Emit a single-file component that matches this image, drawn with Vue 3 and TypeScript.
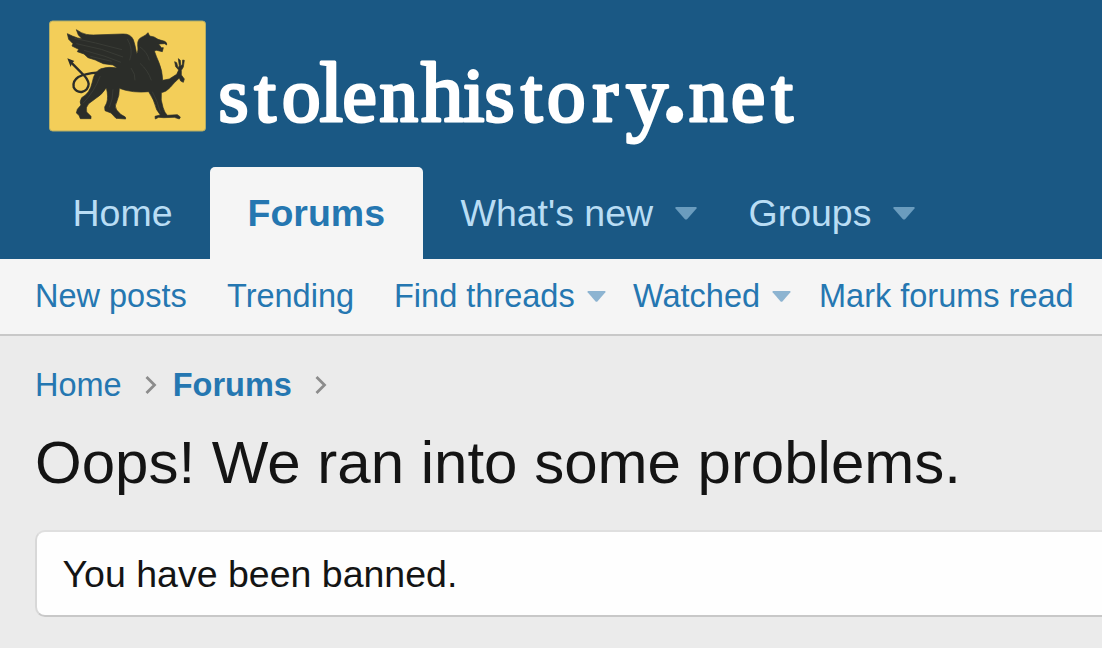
<script setup lang="ts">
interface NavItem {
  label: string
  key: string
  active?: boolean
  menu?: boolean
}

const tabs: NavItem[] = [
  { label: 'Home', key: 'home' },
  { label: 'Forums', key: 'forums', active: true },
  { label: "What's new", key: 'new', menu: true },
  { label: 'Groups', key: 'groups', menu: true },
]

const links: NavItem[] = [
  { label: 'New posts', key: 'posts' },
  { label: 'Trending', key: 'trending' },
  { label: 'Find threads', key: 'find', menu: true },
  { label: 'Watched', key: 'watched', menu: true },
  { label: 'Mark forums read', key: 'mark' },
]
</script>

<template>
  <div class="page">
    <header class="header">
      <svg class="logo" width="760" height="140" viewBox="0 0 760 140" role="img" aria-label="stolenhistory.net">
        <defs>
          <filter id="soft" x="-2%" y="-10%" width="104%" height="120%">
            <feGaussianBlur stdDeviation="0.5" />
          </filter>
        </defs>
        <rect x="1.5" y="12" width="156" height="110" rx="3" fill="#f3ce59" stroke="#b3ad66" stroke-width="1" />
        <g transform="translate(-8 1) scale(.33333)" fill="#2b2d29">
          <path stroke="#2b2d29" stroke-width="2" stroke-linejoin="round" d="M109 59 L124 68 Q137 75 160 75 L248 72 Q272 71 280 89 Q285 103 290 131 Q296 123 293 104 Q292 86 308 80 L316 76 L324 68 L329 78 Q343 79 354 88 L374 94 Q382 98 380 105 L374 101 L356 102 L364 113 L370 113 L367 125 L350 121 L343 123 Q349 140 357 158 Q367 181 368 211 L388 207 L410 193 L416 180 L407 170 L404 155 L410 158 L414 173 L418 168 L415 146 L421 151 L422 169 L427 163 L428 150 L433 151 L430 171 L424 181 L424 195 L433 207 L430 217 L422 213 L418 204 Q402 218 391 232 Q378 247 364 248 Q361 270 369 292 Q374 309 382 316 L412 314 L421 321 L418 327 L403 322 L371 323 L356 322 L346 327 L345 319 L361 315 L350 299 Q342 268 326 245 Q278 250 238 235 Q239 256 230 276 Q222 288 230 300 L242 313 L256 321 L257 327 L228 325 L213 309 L195 302 L194 291 L200 279 Q206 261 199 233 Q186 254 169 264 L146 281 Q136 292 140 306 L153 319 L153 326 L121 326 L117 316 L109 309 L112 298 L123 285 Q117 277 125 263 Q150 250 157 216 Q162 185 183 176 Q207 169 232 174 L219 165 L190 161 L174 154 L166 150 L144 143 L132 132 L112 125 L116 118 L96 108 L99 101 L86 88 L82 71 L97 78 L113 84 L126 86 L115 75 Z" />
          <path d="M171 188 Q138 190 115 201 Q97 213 101 232 Q108 247 125 246 Q145 241 146 222 Q144 206 126 190 L94 158" fill="none" stroke="#2b2d29" stroke-width="7" />
          <path d="M82 145 L103 153 L96 159 L92 171 Z" />
          <g fill="none" stroke="#53564d" stroke-width="3" opacity=".35">
            <path d="M103 85 L167 99 L246 119 M109 101 L184 118 L249 141 M132 121 L195 139 L243 157 M151 139 L215 154" />
            <path d="M262 87 Q281 118 269 151 M300 111 Q322 126 328 151 M300 160 Q324 181 334 211 M273 174 Q287 193 285 211 M337 245 Q353 273 361 307 M181 198 Q163 245 129 280 M219 238 Q219 269 208 292" />
          </g>
        </g>
        <text
          class="wordmark"
          filter="url(#soft)"
          x="170.5 206.5 234 271.5 294.5 331.5 373 415 436.5 473 499 544.5 578 617 641 683 723.5"
          y="111.5"
        >sto<tspan class="tall">l</tspan>en<tspan class="tall">h</tspan>istor<tspan class="low" dy="4">y</tspan><tspan class="dot" dy="-7">.</tspan><tspan dy="3">n</tspan>et</text>
      </svg>

      <nav class="tabs">
        <a v-for="t in tabs" :key="t.key" class="tab" :class="['tab-' + t.key, { active: t.active }]">
          <span class="label">{{ t.label }}</span>
          <svg v-if="t.menu" class="caret" width="22" height="13" viewBox="0 0 22 13">
            <path d="M1 0H21Q22 .2 21.5 1.5L12.3 12Q11 13.2 9.7 12L.5 1.5Q0 .2 1 0Z" fill="currentColor" />
          </svg>
        </a>
      </nav>
    </header>

    <nav class="subnav">
      <a v-for="l in links" :key="l.key" class="link" :class="'link-' + l.key">
        <span class="label">{{ l.label }}</span>
        <svg v-if="l.menu" class="caret" width="19" height="11" viewBox="0 0 22 13">
          <path d="M1 0H21Q22 .2 21.5 1.5L12.3 12Q11 13.2 9.7 12L.5 1.5Q0 .2 1 0Z" fill="currentColor" />
        </svg>
      </a>
    </nav>

    <main class="body">
      <div class="crumbs">
        <a>Home</a>
        <svg class="chev" width="12" height="20" viewBox="0 0 12 20"><path d="M1.5 2 9.5 10 1.5 18" /></svg>
        <a class="current">Forums</a>
        <svg class="chev" width="12" height="20" viewBox="0 0 12 20"><path d="M1.5 2 9.5 10 1.5 18" /></svg>
      </div>
      <h1>Oops! We ran into some problems.</h1>
      <div class="block"><span>You have been banned.</span></div>
    </main>
  </div>
</template>

<style>
body {
  margin: 0;
  background: #ebebeb;
}
</style>

<style scoped>
.page {
  width: 100%;
  height: 648px;
  overflow: hidden;
  background: #ebebeb;
  font-family: "Liberation Sans", Arial, sans-serif;
  color: #141414;
  white-space: nowrap;
}
.header {
  height: 259px;
  background: #1a5884;
  display: flex;
  flex-direction: column;
}
.logo {
  display: block;
  flex: none;
  margin: 9px 0 18px 48px;
  overflow: visible;
}
.wordmark {
  font-family: "Liberation Serif", "Times New Roman", serif;
  font-size: 77px;
  fill: #fff;
  stroke: #fff;
  stroke-width: 3px;
  stroke-linejoin: round;
}
.wordmark .tall {
  font-size: 85px;
}
.wordmark .low {
  font-size: 84px;
}
.wordmark .dot {
  stroke-width: 8px;
}
.tabs {
  display: flex;
  height: 92px;
  padding-left: 35px;
}
.tab {
  box-sizing: border-box;
  display: flex;
  align-items: center;
  height: 92px;
  padding: 0 37.5px;
  font-size: 37.5px;
  color: #b9ddf4;
}
.tab-home {
  width: 175px;
}
.tab-new {
  width: 288px;
  padding-right: 0;
}
.tab-forums {
  width: 213px;
}
.tab.active {
  background: #f5f5f5;
  color: #2577b1;
  font-weight: 700;
  border-radius: 5px 5px 0 0;
}
.caret {
  flex: none;
}
.tab .caret {
  color: #6a9cbe;
  margin-left: 22px;
}
.subnav {
  box-sizing: border-box;
  height: 77px;
  display: flex;
  align-items: center;
  padding-left: 35px;
  background: #f5f5f5;
  border-bottom: 2px solid #c8c8c8;
  color: #2577b1;
  font-size: 32.5px;
}
.link {
  display: flex;
  align-items: center;
  flex: none;
}
.link .caret {
  color: #8db4d1;
  margin-left: 12px;
}
.link-posts {
  width: 192px;
}
.link-trending {
  width: 167px;
}
.link-find {
  width: 239px;
}
.link-watched {
  width: 186px;
}
.body {
  padding-left: 35px;
}
.crumbs {
  display: flex;
  align-items: center;
  height: 38px;
  padding-top: 30px;
  font-size: 32.5px;
  color: #2577b1;
}
.current {
  font-weight: 700;
}
.chev {
  margin: 0 15.5px 0 23.5px;
  fill: none;
  stroke: #8c8c8c;
  stroke-width: 2.8;
}
h1 {
  margin: 23px 0 0;
  font-size: 60px;
  font-weight: 400;
  line-height: 72px;
}
.block {
  box-sizing: border-box;
  height: 87px;
  margin-top: 31px;
  padding: 2px 0 0 25.5px;
  display: flex;
  align-items: center;
  background: #fefefe;
  border: 2px solid #d8d8d8;
  border-top-color: #dfdfdf;
  border-bottom-color: #c8c8c8;
  border-right: 0;
  border-radius: 10px 0 0 10px;
  font-size: 37.5px;
}
</style>
